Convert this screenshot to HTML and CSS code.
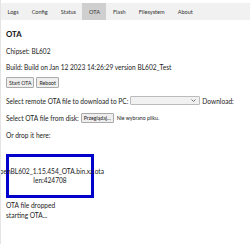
FILE: index.html
```html
<!DOCTYPE html>
<html lang="en">
<head>
    <meta charset="UTF-8">
    <meta name="viewport" content="width=device-width, initial-scale=1.0">
    <title>OTA</title>
    <link rel="stylesheet" href="styles.css">
</head>
<body>
    <nav class="tabs">
        <a href="#">Logs</a>
        <a href="#">Config</a>
        <a href="#">Status</a>
        <a href="#" class="active">OTA</a>
        <a href="#">Flash</a>
        <a href="#">Filesystem</a>
        <a href="#">About</a>
    </nav>
    <div class="page">
        <h3>OTA</h3>
        <p>Chipset: BL602</p>
        <p>Build: Build on Jan 12 2023 14:26:29 version BL602_Test</p>
        <div class="buttons">
            <button>Start OTA</button>
            <button>Reboot</button>
        </div>
        <p class="row">
            <span>Select remote OTA file to download to PC:</span>
            <span class="select">
                <svg width="5" height="3" viewBox="0 0 5 3"><polyline points="0.5,0.5 2.5,2.5 4.5,0.5" fill="none" stroke="#555" stroke-width="0.8"/></svg>
            </span>
            <span>Download:</span>
        </p>
        <p class="row">
            <span>Select OTA file from disk:</span>
            <button class="browse">Przeglądaj...</button>
            <span class="small">Nie wybrano pliku.</span>
        </p>
        <p>Or drop it here:</p>
        <div class="dropzone">
            <div>openBL602_1.15.454_OTA.bin.xz.ota</div>
            <div>len:424708</div>
        </div>
        <div class="status">
            <div>OTA file dropped</div>
            <div>starting OTA...</div>
        </div>
    </div>
</body>
</html>
```

FILE: styles.css
```css
body {
    margin: 0;
    font-family: Lato, "Open Sans", sans-serif;
    font-size: 6.6px;
    color: #222;
    background: #fff;
    border-left: 1px solid #e4e4e4;
    height: 244px;
    box-sizing: border-box;
}
.tabs {
    display: flex;
    margin-top: 3px;
    height: 17px;
    background: #f1f1f1;
}
.tabs a {
    display: flex;
    align-items: center;
    padding: 0 6.5px;
    color: #333;
    font-size: 5.6px;
    text-decoration: none;
}
.tabs a.active {
    background: #cfcfcf;
}
.page {
    padding-left: 5px;
}
h3 {
    margin: 9px 0 0;
    font-size: 7.8px;
    font-weight: bold;
    color: #111;
}
p {
    margin: 8px 0 0;
}
.buttons {
    margin-top: 6px;
    display: flex;
    gap: 2px;
}
button {
    font-family: inherit;
    font-size: 5.2px;
    padding: 0 2px;
    height: 11px;
    border: 1px solid #aaa;
    border-radius: 1px;
    background: #eee;
    color: #222;
}
.row {
    display: flex;
    align-items: center;
    gap: 2px;
    margin-top: 8px;
}
.select {
    display: flex;
    justify-content: flex-end;
    align-items: center;
    width: 70px;
    height: 9px;
    border: 1px solid #bbb;
    border-radius: 1px;
    background: #f1f1f1;
    padding-right: 3px;
    box-sizing: border-box;
}
.browse {
    height: 10px;
}
.small {
    font-size: 5.2px;
    margin-left: 1px;
}
.dropzone {
    margin-top: 15px;
    width: 82px;
    height: 38px;
    border: 3px solid #0000cc;
    display: flex;
    flex-direction: column;
    justify-content: center;
    align-items: center;
    font-size: 6.6px;
    white-space: nowrap;
    line-height: 1.3;
}
.status {
    margin-top: 3px;
    line-height: 1.45;
}
```
